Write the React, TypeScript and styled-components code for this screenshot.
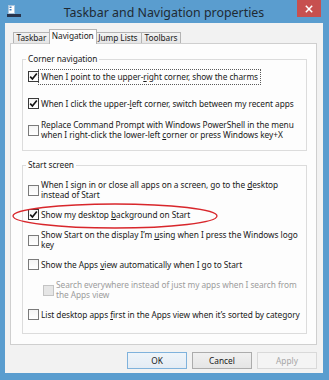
import React from 'react';
import styled, { createGlobalStyle } from 'styled-components';

const FONT = `"Noto Sans", "Open Sans", sans-serif`;

const Global = createGlobalStyle`
  html, body { margin: 0; padding: 0; background: #ffffff; }
  body { font-family: ${FONT}; }
`;

const Window = styled.div`
  position: relative;
  width: 329px;
  height: 380px;
  box-sizing: border-box;
  background: #5a9dcf;
  padding: 0 6px 7px 5px;
  display: flex;
  flex-direction: column;
  font-family: ${FONT};
`;

const TitleBar = styled.div`
  height: 23px;
  flex: none;
  display: grid;
  grid-template-columns: 1fr auto 1fr;
  align-items: start;
`;

const AppIcon = styled.svg`
  margin: 5px 0 0 2px;
  display: block;
`;

const TitleText = styled.div`
  padding-top: 4px;
  font-size: 12.4px;
  line-height: 18px;
  color: #1f2a33;
  white-space: nowrap;
`;

const CloseButton = styled.div`
  justify-self: end;
  width: 24px;
  height: 17px;
  margin-right: 2px;
  background: #c7504f;
  display: flex;
  align-items: center;
  justify-content: center;
`;

const Client = styled.div`
  flex: 1;
  background: #f2f2f2;
  display: flex;
  flex-direction: column;
  padding: 6px 6px 4px 5px;
`;

const TabStrip = styled.div`
  display: flex;
  align-items: flex-end;
  padding-left: 3px;
  height: 15px;
  margin-bottom: -1px;
  position: relative;
  z-index: 1;
`;

const Tab = styled.div<{ $active?: boolean; $pad?: number }>`
  box-sizing: border-box;
  height: ${(p) => (p.$active ? 15 : 11)}px;
  margin: ${(p) => (p.$active ? '0 -2px 0 -1px' : '0 0 1px -1px')};
  padding: ${(p) => (p.$active ? '0 2px 2px' : `0 ${p.$pad ?? 2.5}px`)};
  border: 1px solid #b4b4b4;
  border-bottom: none;
  background: ${(p) => (p.$active ? '#fdfdfd' : 'linear-gradient(#f2f2f2, #e6e6e6)')};
  font-size: 8.3px;
  letter-spacing: -0.05px;
  line-height: 10px;
  color: #1a1a1a;
  display: flex;
  align-items: center;
  position: relative;
  z-index: ${(p) => (p.$active ? 2 : 1)};
  white-space: nowrap;
  &:first-child { margin-left: 0; }
`;

const Panel = styled.div`
  box-sizing: border-box;
  height: 302px;
  flex: none;
  border: 1px solid #cfcfcf;
  background: #fdfdfd;
  padding: 10px 9px 0 11px;
  display: flex;
  flex-direction: column;
`;

const Group = styled.fieldset<{ $mt?: number; $pt: number; $pb: number }>`
  margin: ${(p) => p.$mt ?? 0}px 0 0 0;
  min-width: 0;
  border: 1px solid #dcdcdc;
  padding: ${(p) => p.$pt}px 4px ${(p) => p.$pb}px 5px;
`;

const Legend = styled.legend`
  padding: 0 2px;
  margin-left: -2px;
  font-size: 8.3px;
  letter-spacing: -0.05px;
  line-height: 10px;
  color: #1a1a1a;
`;

const Option = styled.div<{ $mt?: number; $indent?: number }>`
  display: flex;
  align-items: center;
  gap: 2px;
  margin-top: ${(p) => p.$mt ?? 0}px;
  padding-left: ${(p) => p.$indent ?? 0}px;
`;

const Box = styled.div<{ $disabled?: boolean; $checked?: boolean }>`
  box-sizing: border-box;
  flex: none;
  width: 11px;
  height: 11px;
  border: 1px solid ${(p) => (p.$disabled ? '#c4c4c4' : p.$checked ? '#3a3a3a' : '#7a7a7a')};
  background: ${(p) => (p.$disabled ? '#e6e6e6' : 'linear-gradient(#f4f4f4, #ffffff)')};
  display: flex;
  align-items: center;
  justify-content: center;
`;

const Label = styled.div<{ $disabled?: boolean; $focused?: boolean }>`
  font-size: 8.3px;
  letter-spacing: -0.05px;
  line-height: 10px;
  color: ${(p) => (p.$disabled ? '#9c9c9c' : '#1a1a1a')};
  white-space: nowrap;
  ${(p) => (p.$focused ? 'outline: 1px dotted #5a5a5a; outline-offset: 2px;' : '')}
  u { text-decoration-thickness: 1px; text-underline-offset: 1px; }
`;

const ButtonRow = styled.div`
  display: flex;
  justify-content: flex-end;
  gap: 5px;
  margin-top: 7px;
`;

const Button = styled.div<{ $variant?: 'default' | 'disabled' }>`
  box-sizing: border-box;
  width: 60px;
  height: 17px;
  border: 1px solid
    ${(p) => (p.$variant === 'default' ? '#7fb2dc' : p.$variant === 'disabled' ? '#d9d9d9' : '#acacac')};
  background: ${(p) =>
    p.$variant === 'disabled' ? '#f4f4f4' : p.$variant === 'default' ? 'linear-gradient(#eef4fa, #e4ecf4)' : 'linear-gradient(#f0f0f0, #e5e5e5)'};
  color: ${(p) => (p.$variant === 'disabled' ? '#a6a6a6' : '#1a1a1a')};
  font-size: 8.3px;
  line-height: 10px;
  display: flex;
  align-items: center;
  justify-content: center;
`;

const Annotation = styled.svg`
  position: absolute;
  left: 12px;
  top: 203px;
  pointer-events: none;
`;

const Check = () => (
  <svg width="9" height="9" viewBox="0 0 9 9">
    <path d="M1.2 4.6 L3.4 7 L7.8 1.4" fill="none" stroke="#111" strokeWidth="1.6" />
  </svg>
);

type Opt = {
  lines: React.ReactNode[];
  checked?: boolean;
  disabled?: boolean;
  focused?: boolean;
  mt?: number;
  indent?: number;
};

const CheckOption = ({ lines, checked, disabled, focused, mt, indent }: Opt) => (
  <Option $mt={mt} $indent={indent}>
    <Box $checked={checked} $disabled={disabled}>{checked && <Check />}</Box>
    <Label $disabled={disabled} $focused={focused}>
      {lines.map((l, i) => (
        <div key={i}>{l}</div>
      ))}
    </Label>
  </Option>
);

export default function App() {
  return (
    <>
      <Global />
      <Window>
        <TitleBar>
          <AppIcon width="14" height="13" viewBox="0 0 14 13">
            <rect x="1.5" y="0.5" width="6" height="8" fill="#ffffff" stroke="#a9c4dc" />
            <rect x="2.5" y="1.5" width="2" height="1.5" fill="#3d7fc0" />
            <rect x="2.5" y="4" width="2" height="1.5" fill="#3d7fc0" />
            <rect x="0" y="9" width="14" height="3" fill="#27344d" />
          </AppIcon>
          <TitleText>Taskbar and Navigation properties</TitleText>
          <CloseButton>
            <svg width="8" height="8" viewBox="0 0 8 8">
              <path d="M0.8 0.8 L7.2 7.2 M7.2 0.8 L0.8 7.2" stroke="#fff" strokeWidth="1.5" />
            </svg>
          </CloseButton>
        </TitleBar>
        <Client>
          <TabStrip>
            <Tab>Taskbar</Tab>
            <Tab $active>Navigation</Tab>
            <Tab $pad={3.5}>Jump Lists</Tab>
            <Tab>Toolbars</Tab>
          </TabStrip>
          <Panel>
            <Group $pt={7} $pb={10}>
              <Legend>Corner navigation</Legend>
              <CheckOption
                checked
                focused
                lines={[<>When I point to the upper-<u>r</u>ight corner, show the charms</>]}
              />
              <CheckOption
                checked
                mt={16}
                lines={[<>When I click the upper-<u>l</u>eft corner, switch between my recent apps</>]}
              />
              <CheckOption
                mt={11}
                lines={[
                  'Replace Command Prompt with Windows PowerShell in the menu',
                  <>when I right-click the lower-left <u>c</u>orner or press Windows key+X</>,
                ]}
              />
            </Group>
            <Group $mt={9} $pt={10} $pb={13}>
              <Legend>Start screen</Legend>
              <CheckOption
                lines={[
                  <>When I sign in or close all apps on a screen, go to the <u>d</u>esktop</>,
                  'instead of Start',
                ]}
              />
              <CheckOption checked mt={9} lines={[<>Show my desktop <u>b</u>ackground on Start</>]} />
              <CheckOption
                mt={10}
                lines={[<>Show Start on the display I’m <u>u</u>sing when I press the Windows logo</>, 'key']}
              />
              <CheckOption mt={9} lines={[<>Show the Apps <u>v</u>iew automatically when I go to Start</>]} />
              <CheckOption
                mt={10}
                indent={15}
                disabled
                lines={['Search everywhere instead of just my apps when I search from', 'the Apps view']}
              />
              <CheckOption
                mt={9}
                lines={[<>List desktop apps <u>f</u>irst in the Apps view when it’s sorted by category</>]}
              />
            </Group>
          </Panel>
          <ButtonRow>
            <Button $variant="default">OK</Button>
            <Button>Cancel</Button>
            <Button $variant="disabled">Apply</Button>
          </ButtonRow>
        </Client>
        <Annotation width="206" height="26" viewBox="0 0 206 26">
          <ellipse cx="103" cy="13" rx="102" ry="12" fill="none" stroke="#d8262b" strokeWidth="1.3" />
        </Annotation>
      </Window>
    </>
  );
}
